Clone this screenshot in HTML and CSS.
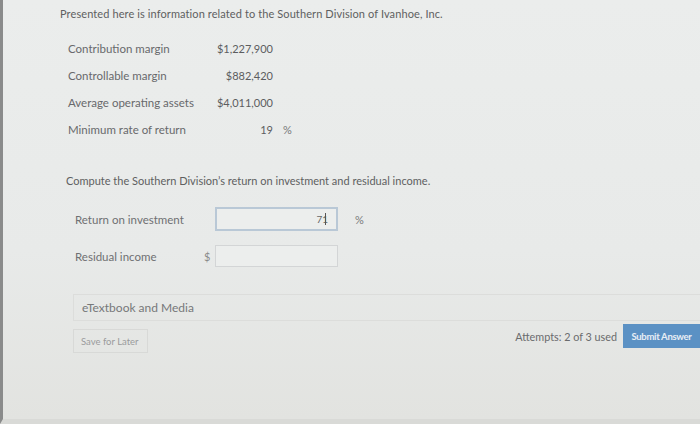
FILE: index.html
```html
<!DOCTYPE html>
<html>
<head>
<meta charset="utf-8">
<link rel="stylesheet" href="styles.css">
</head>
<body>
<div class="screen">
  <p class="intro">Presented here is information related to the Southern Division of Ivanhoe, Inc.</p>
  <div class="data">
    <div class="label">Contribution margin</div><div class="val">$1,227,900</div><div class="unit"></div>
    <div class="label">Controllable margin</div><div class="val">$882,420</div><div class="unit"></div>
    <div class="label">Average operating assets</div><div class="val">$4,011,000</div><div class="unit"></div>
    <div class="label">Minimum rate of return</div><div class="val">19</div><div class="unit">%</div>
  </div>
  <p class="compute">Compute the Southern Division’s return on investment and residual income.</p>
  <div class="answers">
    <div class="alabel">Return on investment</div>
    <div class="pre"></div>
    <div class="box active"><span>71</span><i class="caret"></i></div>
    <div class="post">%</div>
    <div class="alabel">Residual income</div>
    <div class="pre">$</div>
    <div class="box"></div>
    <div class="post"></div>
  </div>
  <div class="etext">eTextbook and Media</div>
  <div class="footer">
    <button class="save">Save for Later</button>
    <div class="right">
      <span class="attempts">Attempts: 2 of 3 used</span>
      <button class="submit">Submit Answer</button>
    </div>
  </div>
</div>
</body>
</html>
```
FILE: styles.css
```css
html, body {
  margin: 0;
  padding: 0;
  width: 700px;
  height: 424px;
  overflow: hidden;
}
body {
  background: #e9ebea;
  font-family: Lato, "Open Sans", sans-serif;
  color: #5e5f61;
}
.screen {
  box-sizing: border-box;
  height: 424px;
  border-left: 3px solid #8a8b8b;
  border-bottom: 5px solid #d9dad7;
  background: linear-gradient(180deg, #ebedec 0%, #e8eae9 60%, #e2e3e0 100%);
  padding: 6px 0 0 57px;
}
.intro {
  margin: 0;
  font-size: 11px;
  letter-spacing: 0.1px;
  line-height: 16px;
}
.data {
  display: grid;
  grid-template-columns: 146px 59px 20px;
  grid-auto-rows: 27px;
  margin: 13px 0 0 8px;
  font-size: 11.5px;
  align-items: center;
}
.data .label { color: #68696b; }
.data .val { text-align: right; color: #5c5d5f; font-size: 11px; }
.data .unit { padding-left: 10px; color: #777; font-size: 11px; }
.compute {
  margin: 30px 0 0 6px;
  font-size: 11px;
  line-height: 16px;
}
.answers {
  display: grid;
  grid-template-columns: 125px 15px 123px 40px;
  grid-template-rows: 24px 22px;
  row-gap: 14px;
  margin: 18px 0 0 15px;
  font-size: 11.5px;
  align-items: center;
}
.alabel { color: #6f7072; }
.pre { color: #8a8a8a; padding-left: 4px; font-size: 11px; }
.post { padding-left: 17px; color: #7a7a7a; font-size: 11px; }
.box {
  box-sizing: border-box;
  height: 100%;
  border: 1px solid #d3d5d6;
  background: #eceeed;
  display: flex;
  align-items: center;
  justify-content: flex-end;
  padding-right: 10px;
  font-size: 10px;
  color: #666;
}
.box.active {
  border: 2px solid #b9c8d6;
}
.caret {
  display: inline-block;
  width: 1px;
  height: 12px;
  background: #555;
  margin-left: -3px;
}
.etext {
  box-sizing: border-box;
  margin: 27px 0 0 13px;
  height: 27px;
  border: 1px solid #dcdddb;
  border-right: none;
  padding-left: 8px;
  line-height: 25px;
  font-size: 12px;
  color: #77787a;
}
.footer {
  display: flex;
  justify-content: space-between;
  align-items: flex-start;
  margin: 3px 0 0 13px;
}
.save {
  margin-top: 5px;
  height: 24px;
  width: 75px;
  border: 1px solid #d8d9d7;
  background: transparent;
  font-family: Lato, sans-serif;
  font-size: 9.5px;
  color: #9a9b9c;
  padding: 0 7px;
  text-align: left;
  white-space: nowrap;
}
.right {
  display: flex;
  align-items: center;
  gap: 6px;
}
.attempts {
  font-size: 10.8px;
  color: #6a6b6d;
}
.submit {
  height: 24px;
  width: 77px;
  border: none;
  background: #5b91c4;
  color: #e8eef5;
  font-family: Lato, sans-serif;
  font-size: 9.5px;
  font-weight: bold;
  letter-spacing: -0.3px;
  padding: 0;
  white-space: nowrap;
}
```
